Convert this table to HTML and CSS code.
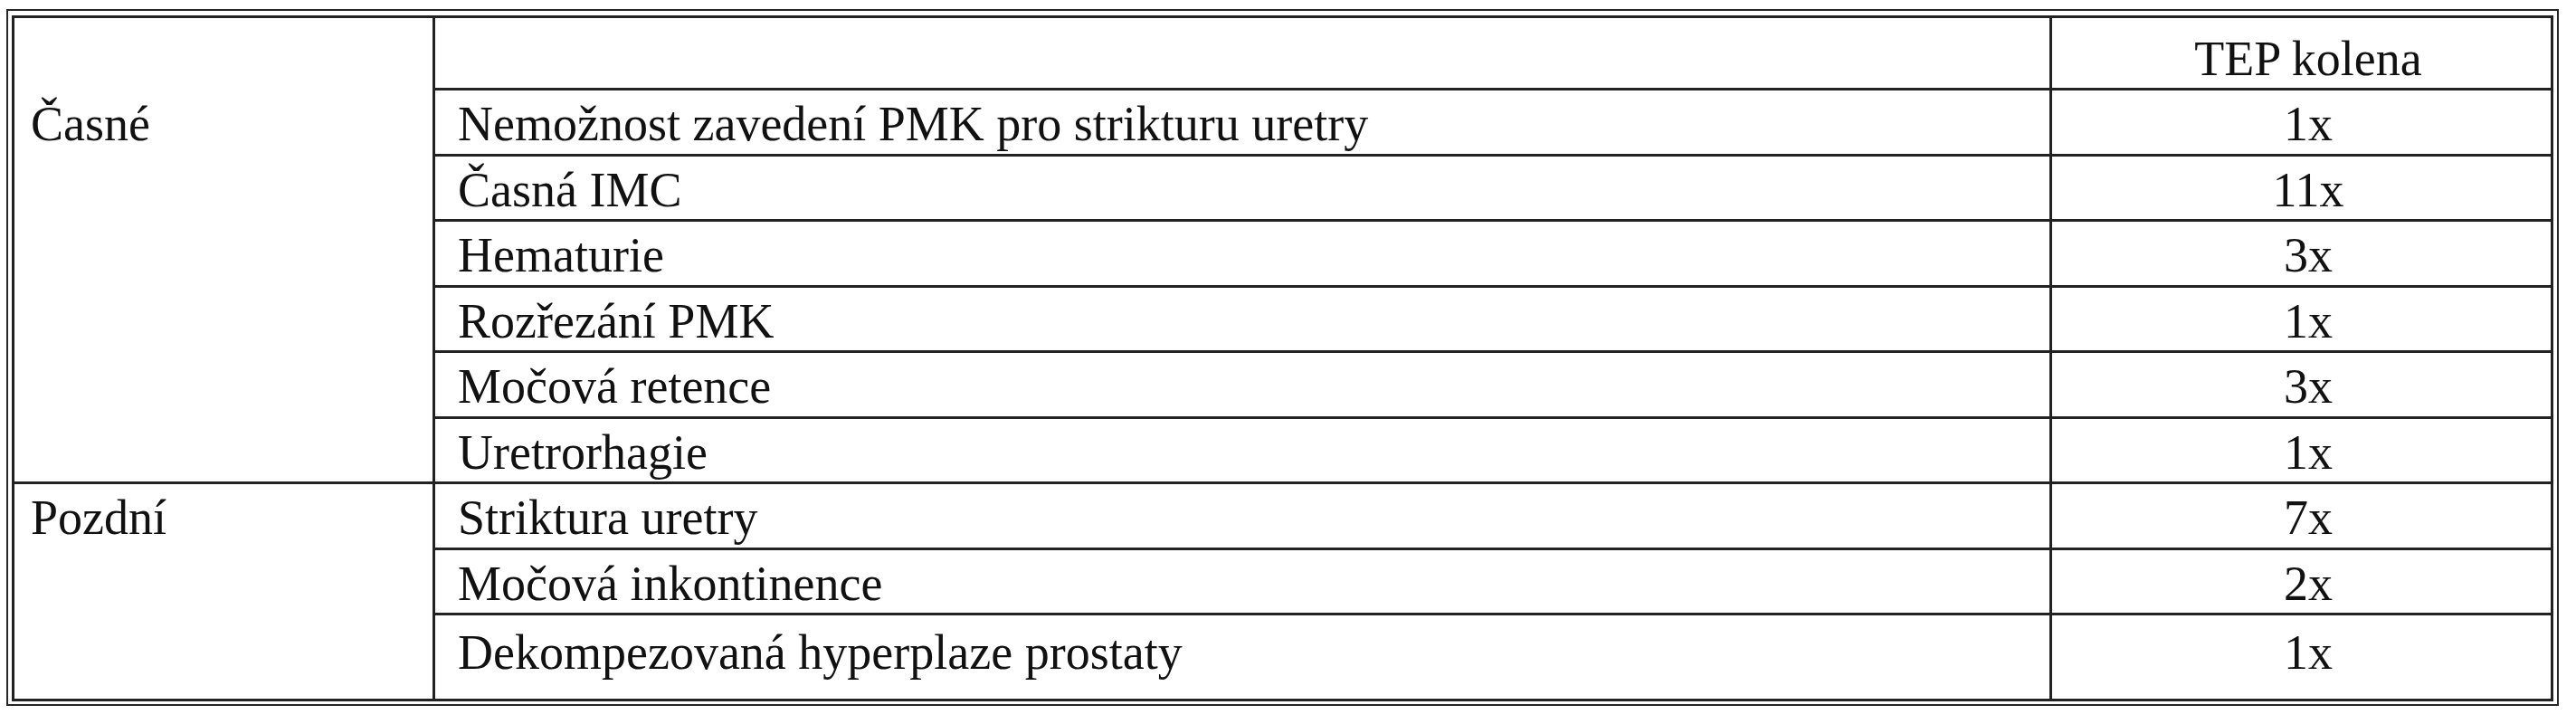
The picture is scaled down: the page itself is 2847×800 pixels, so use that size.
FILE: index.html
```html
<!DOCTYPE html>
<html lang="cs">
<head>
<meta charset="utf-8">
<title>Komplikace</title>
<link rel="stylesheet" href="styles.css">
</head>
<body>
<div class="frame">
  <div class="grid" role="table">
    <div class="cell group group-early" role="cell">Časné</div>
    <div class="cell head" role="columnheader"></div>
    <div class="cell head num" role="columnheader">TEP kolena</div>

    <div class="cell" role="cell">Nemožnost zavedení PMK pro strikturu uretry</div>
    <div class="cell num" role="cell">1x</div>
    <div class="cell" role="cell">Časná IMC</div>
    <div class="cell num" role="cell">11x</div>
    <div class="cell" role="cell">Hematurie</div>
    <div class="cell num" role="cell">3x</div>
    <div class="cell" role="cell">Rozřezání PMK</div>
    <div class="cell num" role="cell">1x</div>
    <div class="cell" role="cell">Močová retence</div>
    <div class="cell num" role="cell">3x</div>
    <div class="cell" role="cell">Uretrorhagie</div>
    <div class="cell num" role="cell">1x</div>

    <div class="cell group group-late" role="cell">Pozdní</div>
    <div class="cell" role="cell">Striktura uretry</div>
    <div class="cell num" role="cell">7x</div>
    <div class="cell" role="cell">Močová inkontinence</div>
    <div class="cell num" role="cell">2x</div>
    <div class="cell last" role="cell">Dekompezovaná hyperplaze prostaty</div>
    <div class="cell num last" role="cell">1x</div>
  </div>
</div>
</body>
</html>
```

FILE: styles.css
```css
html, body {
  margin: 0;
  padding: 0;
  background: #ffffff;
}

body {
  font-family: "Liberation Serif", "Times New Roman", serif;
  font-size: 54px;
  line-height: 62px;
  color: #111111;
}

.frame {
  display: inline-block;
  margin: 10px 0 0 7px;
  border: 2px solid #262626;
  padding: 5px 4px 3px 4px;
}

.grid {
  display: grid;
  grid-template-columns: 465px 1787px 554px;
  grid-template-rows: 80px repeat(8, 72.5px) 95px;
  border-right: 3px solid #222222;
  border-bottom: 3px solid #222222;
}

.cell {
  box-sizing: border-box;
  border-left: 3px solid #222222;
  border-top: 3px solid #222222;
  padding: 6px 10px 0 25px;
  white-space: nowrap;
}

.group {
  grid-column: 1;
  padding-left: 18px;
}

.group-early {
  grid-row: 1 / span 7;
  padding-top: 86px;
}

.group-late {
  grid-row: 8 / span 3;
}

.head {
  padding-top: 14px;
}

.num {
  text-align: center;
  padding-left: 15px;
  padding-right: 0;
}

.last {
  padding-top: 10px;
}
```
